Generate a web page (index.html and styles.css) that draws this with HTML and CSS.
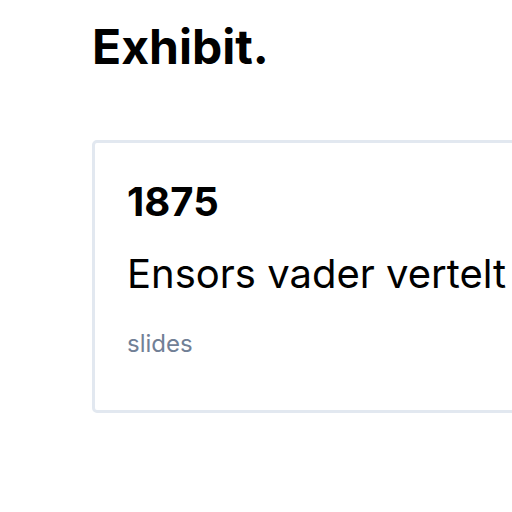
FILE: index.html
```html
<!DOCTYPE html>
<html>
<head>
<meta charset="utf-8">
<link rel="stylesheet" href="styles.css">
</head>
<body>
<main class="page">
  <h1 class="brand">Exhibit.</h1>
  <section class="card">
    <h2 class="year">1875</h2>
    <p class="text">Ensors vader vertelt</p>
    <p class="tag">slides</p>
  </section>
</main>
</body>
</html>
```

FILE: styles.css
```css
html, body {
  margin: 0;
  padding: 0;
  background: #ffffff;
  overflow: hidden;
}
body {
  font-family: Inter, "Noto Sans", sans-serif;
  color: #000;
}
.page {
  padding: 23px 0 0 92px;
}
.brand {
  margin: 0;
  font-size: 48px;
  line-height: 48px;
  font-weight: 700;
}
.card {
  margin-top: 69px;
  width: 640px;
  border: 3px solid #e2e8f0;
  border-radius: 5px;
  padding: 35px 32px 50px;
  box-sizing: border-box;
}
.year {
  margin: 0;
  font-size: 40px;
  line-height: 48px;
  font-weight: 700;
}
.text {
  margin: 24px 0 0;
  font-size: 40px;
  line-height: 48px;
  font-weight: 400;
}
.tag {
  margin: 30px 0 0;
  font-size: 24px;
  line-height: 32px;
  color: #718096;
}
```
